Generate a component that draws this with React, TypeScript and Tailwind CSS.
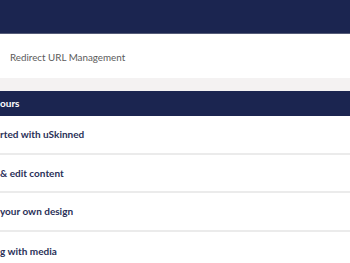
export default function App() {
  const rows = ['rted with uSkinned', '& edit content', 'your own design', 'g with media'];

  return (
    <div className="w-[350px] h-[263px] overflow-hidden bg-white font-['Lato','Liberation_Sans',sans-serif]">
      {/* Top bar */}
      <div className="h-[34px] bg-[#1b2550] border-b border-[#555b78]" />

      {/* Redirect link */}
      <div className="h-[44px] flex items-center pl-[10px] pt-[2px] text-[9.8px] text-[#5b5b5b]">
        Redirect URL Management
      </div>
      <div className="h-[13px] bg-[#f4f2f2]" />

      {/* Tours header */}
      <div className="h-[25px] bg-[#1b2550] flex items-center text-[10px] font-bold text-white">
        ours
      </div>

      {/* Tour list */}
      <ul>
        {rows.map((label, i) => (
          <li
            key={label}
            className={`h-[38.5px] flex items-center pt-[1px] text-[10px] font-bold text-[#2a3058] ${
              i < rows.length - 1 ? 'border-b-2 border-[#ebebeb]' : ''
            }`}
          >
            {label}
          </li>
        ))}
      </ul>
    </div>
  );
}
